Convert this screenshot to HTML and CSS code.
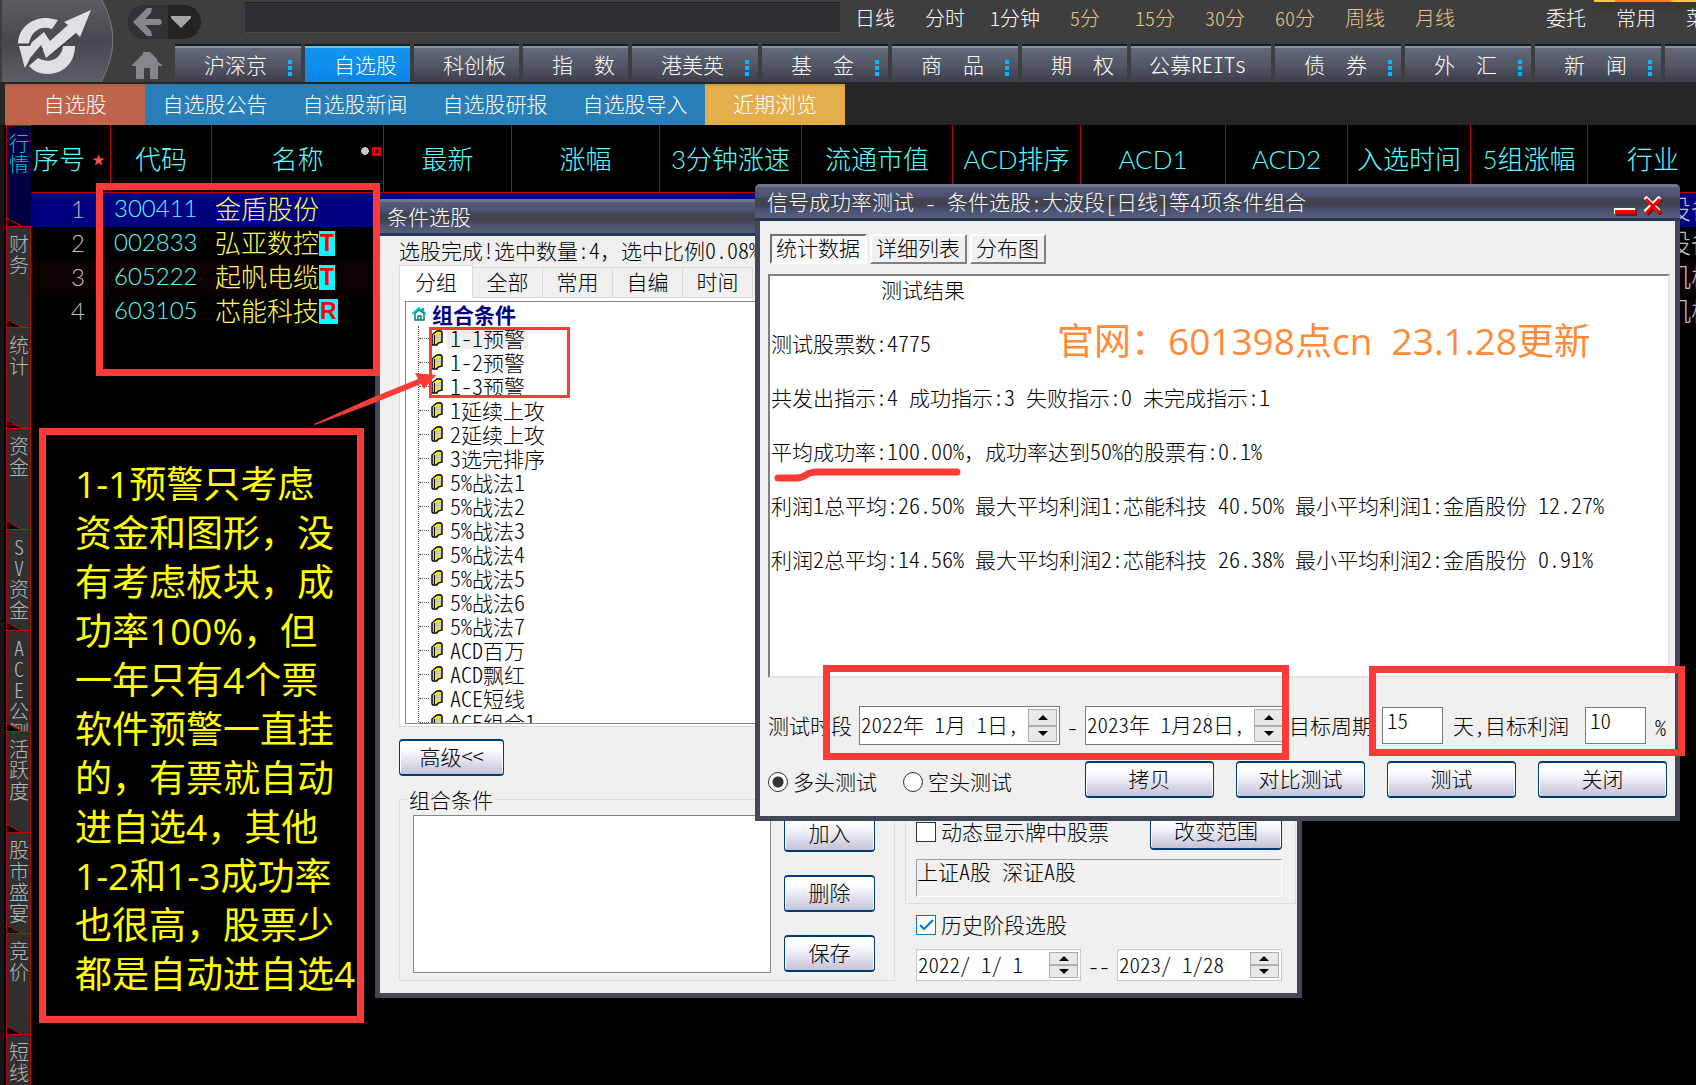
FILE: index.html
```html
<!DOCTYPE html>
<html lang="zh-CN">
<head>
<meta charset="utf-8">
<title>自选股</title>
<link rel="stylesheet" href="styles.css">
</head>
<body>
<svg width="0" height="0" class="defs" aria-hidden="true">
  <symbol id="leaf" viewBox="0 0 12 16">
    <path d="M1 5 L6 1 H10 L11 2 V12 L7 13 L6 15 H2 L1 14 Z" fill="#c8c8c0" stroke="#000" stroke-width="1.4"/>
    <path d="M2 5 L6 2 H10 L7 5 Z" fill="#ffff00"/>
    <path d="M3.500 5 V14" stroke="#000"/>
    <path d="M5.500 9 V13 M8.500 7 V12" stroke="#ffee00" stroke-width="1.600"/>
  </symbol>
</svg>
<div class="app">
  <header class="top">
    <button class="logo" aria-label="主菜单">
      <svg viewBox="0 0 117 83" width="117" height="83">
        <defs><linearGradient id="lg" x1="0" y1="0" x2="0" y2="1"><stop offset="0" stop-color="#5a5d62"/><stop offset=".5" stop-color="#46494f"/><stop offset="1" stop-color="#5b5f66"/></linearGradient></defs>
        <path d="M2 0 H102 Q124 41 101 82 H2 Z" fill="url(#lg)"/>
        <path d="M102 0 Q124 41 101 82" fill="none" stroke="#787b82"/>
        <path d="M18 44 C18 28 32 17 48 18 L58 20 L52 29 C41 25 31 31 29 44 Z" fill="#dfe0e4"/>
        <path d="M32 42 L44 32 L50 41 L68 25 L64 22 L91 10 L80 37 L76 33 L46 58 L41 45 L30 58 L25 69 L19 46 H30 Z" fill="#dfe0e4"/>
        <path d="M29 66 L38 58 C50 65 62 58 63 46 H75 C75 64 62 74 47 74 Q36 74 29 66 Z" fill="#dfe0e4"/>
        <path d="M18 44 H30 M24 69 L43 48 M50 56 L76 34" stroke="#383b40" fill="none"/>
      </svg>
    </button>
    <div class="navcol">
      <div class="backpill">
        <button aria-label="返回"><svg width="30" height="32" viewBox="0 0 30 32"><path d="M0 16 L14 2 H19 L18 7 L12 13 H27 Q31 16 27 19 H12 L18 25 L19 30 H14 Z" fill="#85878c"/></svg></button>
        <button aria-label="历史"><svg width="20" height="12" viewBox="0 0 20 12"><path d="M0 0 H20 V2 L10 12 L0 2 Z" fill="#a5a5a5"/></svg></button>
      </div>
      <button class="home" aria-label="首页"><svg width="30" height="28" viewBox="0 0 30 28"><path d="M0 14 L11 3 V1 H18 L25 8 V10 L30 14 V15 H26 V28 H18 V17 H12 V28 H4 V15 H0 Z" fill="#85878c"/></svg></button>
    </div>
    <div class="topmain">
      <div class="toprow">
        <input class="search" type="text" aria-label="搜索">
        <nav class="periods">
          <a href="#">日线</a><a href="#">分时</a><a href="#"><span>1</span>分钟</a><a href="#" class="tan"><span>5</span>分</a><a href="#" class="tan"><span>15</span>分</a><a href="#" class="tan"><span>30</span>分</a><a href="#" class="tan"><span>60</span>分</a><a href="#" class="tan">周线</a><a href="#" class="tan">月线</a>
        </nav>
        <nav class="periods extra"><a href="#">委托</a><a href="#">常用</a><a href="#">菜单</a></nav>
      </div>
      <nav class="markets">
        <a href="#" class="more">沪深京</a><a href="#" class="on">自选股</a><a href="#">科创板</a><a href="#">指　数</a><a href="#" class="more">港美英</a><a href="#" class="more">基　金</a><a href="#" class="more">商　品</a><a href="#">期　权</a><a href="#" class="reit">公募<span>REITs</span></a><a href="#" class="more">债　券</a><a href="#" class="more">外　汇</a><a href="#" class="more">新　闻</a><a href="#" class="more"></a>
      </nav>
    </div>
    <div class="banner"></div>
  </header>
  <nav class="subtabs">
    <a href="#" class="red">自选股</a><a href="#">自选股公告</a><a href="#">自选股新闻</a><a href="#">自选股研报</a><a href="#">自选股导入</a><a href="#" class="gold">近期浏览</a>
  </nav>
  <main class="main">
    <nav class="side">
      <a href="#" class="on">行<br>情</a><a href="#">财<br>务</a><a href="#">统<br>计</a><a href="#">资<br>金</a><a href="#"><span>S</span><br><span>V</span><br>资<br>金</a><a href="#"><span>A</span><br><span>C</span><br><span>E</span><br>公<br>测</a><a href="#">活<br>跃<br>度</a><a href="#">股<br>市<br>盛<br>宴</a><a href="#">竞<br>价</a><a href="#">短<br>线</a>
    </nav>
    <table class="quotes">
      <colgroup><col class="w80"><col class="w101"><col class="w172"><col class="w128"><col class="w148"><col class="w142"><col class="w151"><col class="w128"><col class="w145"><col class="w122"><col class="w123"><col class="w117"><col class="w130"></colgroup>
      <thead><tr>
        <th class="first">序号<i class="star">★</i></th><th>代码</th><th>名称<i class="marks"></i></th><th>最新</th><th>涨幅</th><th>3分钟涨速</th><th>流通市值</th><th>ACD排序</th><th>ACD1</th><th>ACD2</th><th>入选时间</th><th>5组涨幅</th><th>行业</th>
      </tr></thead>
      <tbody>
        <tr class="sel"><td>1</td><td>300411</td><td>金盾股份</td><td colspan="9"></td><td>专用设备</td></tr>
        <tr><td>2</td><td>002833</td><td>弘亚数控<b>T</b></td><td colspan="9"></td><td>专用设备</td></tr>
        <tr class="alt"><td>3</td><td>605222</td><td>起帆电缆<b>T</b></td><td colspan="9"></td><td>电力机械</td></tr>
        <tr><td>4</td><td>603105</td><td>芯能科技<b>R</b></td><td colspan="9"></td><td>电力机械</td></tr>
      </tbody>
    </table>
  </main>

  <section class="win picker" aria-label="条件选股">
    <h2 class="title">条件选股</h2>
    <div class="pbody">
      <p class="status">选股完成<span>!</span>选中数量<span>:4</span>，选中比例<span>0.08%</span></p>
      <div class="tabs"><button class="on">分组</button><button>全部</button><button>常用</button><button>自编</button><button>时间</button></div>
      <div class="page">
        <div class="tree">
          <div class="root"><svg width="14" height="14" viewBox="0 0 14 14"><path d="M0 7 L7 1 L14 7" fill="none" stroke="#00d8e0" stroke-width="2"/><path d="M3 6.500 V13 H12 V6.500 L7 3 Z" fill="#fff" stroke="#008080" stroke-width="1.500"/><path d="M6 13 V9 H9 V13 M11 1 V4" stroke="#008080" fill="none" stroke-width="1.500"/></svg>组合条件</div>
          <ul>
            <li class="cur"><svg><use href="#leaf"/></svg><em><span>1-1</span>预警</em></li>
            <li><svg><use href="#leaf"/></svg><em><span>1-2</span>预警</em></li>
            <li><svg><use href="#leaf"/></svg><em><span>1-3</span>预警</em></li>
            <li><svg><use href="#leaf"/></svg><em><span>1</span>延续上攻</em></li>
            <li><svg><use href="#leaf"/></svg><em><span>2</span>延续上攻</em></li>
            <li><svg><use href="#leaf"/></svg><em><span>3</span>选完排序</em></li>
            <li><svg><use href="#leaf"/></svg><em><span>5%</span>战法<span>1</span></em></li>
            <li><svg><use href="#leaf"/></svg><em><span>5%</span>战法<span>2</span></em></li>
            <li><svg><use href="#leaf"/></svg><em><span>5%</span>战法<span>3</span></em></li>
            <li><svg><use href="#leaf"/></svg><em><span>5%</span>战法<span>4</span></em></li>
            <li><svg><use href="#leaf"/></svg><em><span>5%</span>战法<span>5</span></em></li>
            <li><svg><use href="#leaf"/></svg><em><span>5%</span>战法<span>6</span></em></li>
            <li><svg><use href="#leaf"/></svg><em><span>5%</span>战法<span>7</span></em></li>
            <li><svg><use href="#leaf"/></svg><em><span>ACD</span>百万</em></li>
            <li><svg><use href="#leaf"/></svg><em><span>ACD</span>飘红</em></li>
            <li><svg><use href="#leaf"/></svg><em><span>ACE</span>短线</em></li>
            <li><svg><use href="#leaf"/></svg><em><span>ACE</span>组合<span>1</span></em></li>
          </ul>
        </div>
      </div>
      <button class="btn adv">高级<span>&lt;&lt;</span></button>
      <div class="lower">
        <fieldset class="combo">
          <legend>组合条件</legend>
          <div class="list"></div>
          <div class="acts"><button class="btn">加入</button><button class="btn">删除</button><button class="btn">保存</button></div>
        </fieldset>
        <div class="scope">
          <div class="range">
            <div class="between"><label class="chk"><input type="checkbox">动态显示牌中股票</label><button class="btn">改变范围</button></div>
            <div class="markets-in">上证<span>A</span>股<span> </span>深证<span>A</span>股</div>
          </div>
          <label class="chk hist"><input type="checkbox" checked>历史阶段选股</label>
          <div class="dates">
            <div class="date"><input type="text" value="2022/ 1/ 1" aria-label="开始日期"><div class="spin"><button aria-label="增加"></button><button aria-label="减少"></button></div></div>
            <span>--</span>
            <div class="date"><input type="text" value="2023/ 1/28" aria-label="结束日期"><div class="spin"><button aria-label="增加"></button><button aria-label="减少"></button></div></div>
          </div>
        </div>
      </div>
    </div>
  </section>

  <section class="win tester" aria-label="信号成功率测试">
    <h2 class="title">信号成功率测试<span> - </span>条件选股<span>:</span>大波段<span>[</span>日线<span>]</span>等<span>4</span>项条件组合
      <span class="ctl">
        <button aria-label="最小化"><svg width="23" height="8" viewBox="0 0 23 8"><path d="M1 1 H22 V6 H1 Z" fill="#f00"/><path d="M0 6 V1 H21" stroke="#fff" stroke-width="2" fill="none"/><path d="M2 7 H22 V2" stroke="#800000" stroke-width="1.500" fill="none"/></svg></button>
        <button aria-label="关闭窗口"><svg width="20" height="20" viewBox="0 0 20 20"><path d="M4 4 L18 18 M18 4 L4 18" stroke="#800000" stroke-width="4"/><path d="M2 1 L16 15 M17 1 L2 16" stroke="#fff" stroke-width="4"/><path d="M3 3 L17 17 M17 3 L3 17" stroke="#f00" stroke-width="3"/></svg></button>
      </span>
    </h2>
    <div class="tbody">
      <div class="modes"><button class="on">统计数据</button><button>详细列表</button><button>分布图</button></div>
      <div class="report">
        <p class="head">测试结果</p>
        <p>测试股票数<span>:4775</span></p>
        <p>共发出指示<span>:4 </span>成功指示<span>:3 </span>失败指示<span>:0 </span>未完成指示<span>:1</span></p>
        <p>平均成功率<span>:100.00%</span>，成功率达到<span>50%</span>的股票有<span>:0.1%</span></p>
        <p>利润<span>1</span>总平均<span>:26.50% </span>最大平均利润<span>1:</span>芯能科技<span> 40.50% </span>最小平均利润<span>1:</span>金盾股份<span> 12.27%</span></p>
        <p>利润<span>2</span>总平均<span>:14.56% </span>最大平均利润<span>2:</span>芯能科技<span> 26.38% </span>最小平均利润<span>2:</span>金盾股份<span> 0.91%</span></p>
      </div>
      <div class="params">
        <label for="from">测试时段</label>
        <div class="date tall"><input id="from" type="text" value="2022年 1月 1日,"><div class="spin"><button aria-label="增加"></button><button aria-label="减少"></button></div></div>
        <span>-</span>
        <div class="date tall"><input type="text" value="2023年 1月28日," aria-label="结束日期"><div class="spin"><button aria-label="增加"></button><button aria-label="减少"></button></div></div>
        <label for="days">目标周期</label>
        <input id="days" class="num" type="text" value="15">
        <label for="gain">天<span>,</span>目标利润</label>
        <input id="gain" class="num" type="text" value="10">
        <span>%</span>
      </div>
      <div class="bottom">
        <label class="chk"><input type="radio" name="side" checked>多头测试</label>
        <label class="chk"><input type="radio" name="side">空头测试</label>
        <div class="btns"><button class="btn">拷贝</button><button class="btn">对比测试</button><button class="btn">测试</button><button class="btn">关闭</button></div>
      </div>
    </div>
  </section>

  <div class="mark m-stocks"></div>
  <div class="mark m-note">
    <p>1-1预警只考虑<br>资金和图形，没<br>有考虑板块，成<br>功率100%，但<br>一年只有4个票<br>软件预警一直挂<br>的，有票就自动<br>进自选4，其他<br>1-2和1-3成功率<br>也很高，股票少<br>都是自动进自选4</p>
  </div>
  <div class="mark thin m-alerts"></div>
  <div class="mark m-period"></div>
  <div class="mark m-goal"></div>
  <p class="site">官网：601398点cn  23.1.28更新</p>
  <svg class="arrow" width="124" height="56" viewBox="0 0 124 56"><path d="M0 54 L55 29 L104 9 L101 3 L122 5 L110 19 L107 14 L55 35 L1 55 Z" fill="#fc3a38"/></svg>
  <svg class="stroke" width="190" height="16" viewBox="0 0 190 16"><path d="M6 11 H24 Q30 11 34 8 Q38 5 46 5 H185" fill="none" stroke="#fc3a38" stroke-width="7" stroke-linecap="round"/></svg>
</div>
</body>
</html>
```
FILE: styles.css
```css
* { box-sizing: border-box; }
body {
  margin: 0;
  background: #000;
  font: 300 21px/27px "Noto Sans CJK SC", sans-serif;
  color: #000;
}
p, h2, ul, fieldset { margin: 0; padding: 0; }
ul { list-style: none; }
a { color: inherit; text-decoration: none; }
em, i { font-style: normal; }
button, input { font: inherit; color: inherit; margin: 0; padding: 0; border: 0; background: none; }
.defs { position: absolute; }

.app { position: relative; height: 100vh; overflow: hidden; }

/* Half-width Latin runs inside the interface text */
.top span, .side span, .win span { font-size: 22px; line-height: 20px; font-feature-settings: "hwid"; white-space: pre; }
.top .periods span, .side span { font-size: 20px; }

/* ---- top bar ---- */
.top { position: relative; display: flex; height: 82px; background: #3e3e3e; color: #fff; }
.logo { width: 117px; height: 82px; }
.logo svg { display: block; }
.navcol { display: flex; flex-direction: column; gap: 12px; width: 58px; padding: 5px 0 0 11px; }
.backpill { display: flex; width: 73px; height: 34px; border-radius: 17px; overflow: hidden; background: #232323; flex: none; position: relative; z-index: 1; }
.backpill button { display: grid; place-items: center; width: 40px; background: #303236; }
.backpill button + button { width: 26px; background: none; }
.home { width: 30px; height: 28px; margin-left: 4px; }
.home svg { display: block; }
.topmain { flex: 1; min-width: 0; }
.toprow { display: flex; height: 44px; padding-left: 70px; }
.search { width: 595px; height: 31px; margin-top: 2px; background: #2d3134; border-top: 1px solid #222; border-bottom: 1px solid #4a4a4a; flex: none; }
.periods { display: flex; font-size: 20px; line-height: 35px; }
.periods a { width: 70px; text-align: center; flex: none; }
.periods.extra { margin-left: 61px; }
.periods .tan { color: #e6c68d; }
.markets { display: flex; gap: 4px; height: 38px; }
.markets a {
  position: relative; flex: none; width: 105px; padding-left: 29px; line-height: 36px;
  border-top: 2px solid #1a1b1d; white-space: nowrap;
  background: linear-gradient(#8794a0 0 2px, #646a7b 2px, #535866 50%, #3b3f49);
}
.markets .more { width: 126px; }
.markets .reit { width: 140px; padding-left: 18px; }
.markets .on { background: linear-gradient(#58c8f4 0 2px, #1496f0 2px, #0a84e8); }
.markets .more::after {
  content: ""; position: absolute; right: 9px; top: 14px; width: 4px; height: 16px;
  background: repeating-linear-gradient(#00b8ff 0 4px, transparent 4px 6px);
}
.banner { position: absolute; right: 0; top: 0; width: 102px; height: 2px; background: linear-gradient(90deg, #ffc83c 20px, #f47a2a 22px 75px, #ffc83c 80px); box-shadow: 0 3px 8px #222; }

.subtabs { display: flex; height: 43px; padding: 2px 0 0 5px; background: #262626; color: #fff; }
.subtabs a { width: 140px; text-align: center; line-height: 35px; background: #2980b9; border-top: 2px solid #2a79ab; }
.subtabs .red { background: #bf644b; border-color: #b35c43; }
.subtabs .gold { background: #e3ae4b; border-color: #cf9c3c; }

/* ---- quotes ---- */
.main { display: flex; align-items: flex-start; }
.side { width: 31px; flex: none; padding-left: 2px; border-left: 4px solid #171717; font-size: 20px; line-height: 21px; }
.side a {
  position: relative; display: block; height: 101px; padding: 6px 0 0 1px; overflow: hidden;
  border: 1px solid #c00000; border-bottom: 0; background: #303030; color: #b8b8b8; text-align: center;
}
.side a::after {
  content: ""; position: absolute; left: -1px; bottom: 0; width: 15px; height: 8px;
  background: linear-gradient(to top right, #000 46%, #c00000 47% 54%, transparent 55%);
}
.side .on { background: #000040; color: #00c8c8; border-right-color: #000040; }
.quotes { table-layout: fixed; width: 1687px; flex: none; border-collapse: separate; border-spacing: 0; font-family: Lato, "Noto Sans CJK SC", sans-serif; line-height: 30px; }
.w80 { width: 80px; } .w101 { width: 101px; } .w172 { width: 172px; } .w128 { width: 128px; }
.w148 { width: 148px; } .w142 { width: 142px; } .w151 { width: 151px; } .w145 { width: 145px; }
.w122 { width: 122px; } .w123 { width: 123px; } .w117 { width: 117px; } .w130 { width: 130px; }
.quotes th { position: relative; height: 68px; padding: 0; font-weight: 300; font-size: 26px; color: #55ffff; border-right: 1px solid #c00000; border-bottom: 1px solid #c00000; white-space: nowrap; }
.quotes th:last-child { border-right: 0; }
.quotes .first { text-align: left; padding-left: 2px; }
.star { position: absolute; right: 5px; top: 19px; font-size: 13px; color: #ff5050; }
.marks { position: absolute; right: 2px; top: 22px; width: 20px; height: 9px; background: radial-gradient(circle 4px at 4px 4px, #c8c8c8 90%, transparent), linear-gradient(#000, #000) 14px 3px / 3px 3px no-repeat, linear-gradient(#e00000, #e00000) 11px 0 / 9px 9px no-repeat; }
.quotes td { height: 34px; padding: 0 0 2px 3px; white-space: nowrap; font-size: 26px; color: #ffff55; }
.quotes td:first-child { text-align: right; padding-right: 26px; font-size: 24px; color: #c0c0c0; }
.quotes td:nth-child(2) { font-size: 24px; color: #55ffff; padding-bottom: 4px; }
.quotes td:last-child { padding-left: 25px; color: #c0c0c0; }
.quotes .sel td { background: #000080; }
.quotes .alt td { background: #0c0000; }
.quotes b { display: inline-block; padding: 0 1px; background: #0ff; color: #f00; font: bold 23px/25px "Liberation Sans", sans-serif; vertical-align: 2px; }

/* ---- dialogs ---- */
.win { position: absolute; background: #f0f0f0; border: 5px solid #434856; border-top: 0; border-radius: 5px 5px 0 0; }
.title {
  display: flex; align-items: center; height: 37px; margin: 0 -5px; padding: 0 12px 2px; border-radius: 5px 5px 0 0;
  font-size: 21px; font-weight: 300; line-height: 35px; color: #fff; white-space: nowrap;
  background: linear-gradient(#70778a 0 3px, #575c7c 3px, #4d5272 12px, #3f444f 15px 22px, #4c5174 26px, #595e78 34px, #26385a 34px);
}
.win .btn {
  height: 37px; padding-bottom: 2px; border: 2px solid #003c74; border-left-width: 1px; border-right-width: 1px; border-radius: 4px; line-height: 29px;
  background: linear-gradient(#fff 20%, #f0f0fa 45%, #dadae8 70%, #c4c3d6); box-shadow: inset 1px 0 #fff, inset -1px 0 #fff;
}
.chk { display: flex; align-items: center; gap: 5px; white-space: nowrap; }
.chk input { appearance: none; width: 20px; height: 20px; border: 1px solid #333; background: #fff; flex: none; }
.chk [type=radio] { border-radius: 50%; }
.chk [type=radio]:checked { background: radial-gradient(circle, #333 5px, #fff 6px); }
.chk [type=checkbox]:checked { border-color: #0078d7; background: #fff url("data:image/svg+xml,%3Csvg xmlns='http://www.w3.org/2000/svg' viewBox='0 0 18 18'%3E%3Cpath d='M3 9l4 4 9-9' fill='none' stroke='%230078d7' stroke-width='2'/%3E%3C/svg%3E"); }
.date { display: flex; width: 165px; height: 32px; padding: 2px 2px 2px 1px; background: #fff; border: 1px solid #c8c8c8; }
.date input { flex: 1; min-width: 0; padding-bottom: 2px; font-feature-settings: "hwid"; }
.spin { display: flex; flex-direction: column; width: 29px; }
.spin button { flex: 1; display: grid; place-items: center; border: 1px solid #adadad; background: #e9e9e9; }
.spin button::before { content: ""; border: 5px solid transparent; border-top: 0; border-bottom-color: #000; }
.spin button + button::before { border-top: 5px solid #000; border-bottom: 0; }
.date.tall { width: 201px; height: 39px; border-color: #7a7a7a; }

.picker { left: 375px; top: 199px; width: 927px; height: 799px; }
.pbody { padding: 1px 1px 0 19px; }
.status { height: 28px; }
.tabs { display: flex; align-items: flex-end; height: 33px; }
.tabs button { width: 70px; height: 31px; padding-bottom: 2px; border: 1px solid #d9d9d9; border-left: 0; }
.tabs .on { width: 74px; height: 33px; background: #fff; border-left: 1px solid #d9d9d9; border-bottom: 0; }
.page { height: 429px; padding: 3px 5px 2px; background: #fff; border: 1px solid #d9d9d9; border-top: 0; }
.tree { height: 423px; padding: 0 6px; overflow: hidden; border: 1px solid #82868f; line-height: 22px; }
.root { display: flex; align-items: center; gap: 6px; height: 24px; font-weight: 700; color: #000080; }
.tree ul { margin-left: 6px; border-left: 1px dotted #555; }
.tree li { display: flex; align-items: center; height: 24px; }
.tree li::before { content: ""; width: 10px; border-top: 1px dotted #555; }
.tree li svg { width: 12px; height: 16px; margin: 0 4px 0 2px; }
.tree em { padding: 0 3px; }
.cur em { background: #efefef; }
.adv { display: block; width: 105px; margin-top: 12px; }
.lower { display: flex; gap: 10px; margin-top: 10px; }
.combo { display: flex; flex: none; gap: 13px; width: 496px; height: 195px; padding: 0 19px 6px 13px; border: 1px solid #dcdcdc; }
.combo legend { margin-left: -6px; padding: 0 2px; }
.combo .list { flex: 1; height: 158px; margin-top: 2px; background: #fff; border: 1px solid #82868f; }
.acts { display: flex; flex-direction: column; gap: 23px; margin-top: 2px; width: 91px; }
.scope { flex: 1; }
.range { height: 118px; padding: 27px 13px 5px 10px; border: 1px solid #dcdcdc; border-top: 0; }
.between { display: flex; justify-content: space-between; align-items: center; }
.range .btn { width: 132px; }
.markets-in { height: 38px; margin-top: 9px; line-height: 20px; border: 1px solid #fff; border-top-color: #a0a0a0; border-left-color: #a0a0a0; }
.hist { margin: 7px 0 0 11px; }
.dates { display: flex; justify-content: space-between; align-items: center; margin: 11px 14px 0 11px; }

.tester { left: 755px; top: 184px; width: 925px; height: 637px; }
.title .ctl { display: flex; align-items: flex-end; gap: 6px; margin-left: auto; padding: 8px 5px 0 0; }
.ctl svg { display: block; }
.tbody { padding: 13px 5px 0 8px; }
.modes { display: flex; gap: 3px; padding-left: 2px; }
.modes button { height: 30px; padding: 0 5px 4px 4px; border: 2px solid; border-color: #fff #808080 #808080 #fff; line-height: 22px; }
.modes .on { background: #f8f8f8; border-color: #707070 #fff #fff #707070; }
.report { display: flex; flex-direction: column; gap: 27px; height: 404px; margin-top: 10px; padding-left: 1px; background: #fff; border: 2px solid #e3e3e3; border-top-color: #808080; border-left-color: #808080; white-space: nowrap; }
.head { padding-left: 110px; }
.params { display: grid; grid-template-columns: 91px 201px 25px 201px 96px 61px 142px 61px 20px; align-items: center; height: 39px; margin-top: 28px; white-space: nowrap; }
.params > span { text-align: right; }
.params > .date + .date, .params > span:nth-child(3) { text-align: center; }
.params label:not(:first-child) { padding-left: 3px; }
.params label[for=gain] { padding-left: 10px; }
.num { width: 61px; height: 37px; padding: 0 4px 12px; background: #fff; border: 1px solid #7a7a7a; font-feature-settings: "hwid"; }
.bottom { display: flex; align-items: center; gap: 26px; margin-top: 16px; }
.bottom .chk { padding-top: 4px; }
.btns { display: flex; gap: 22px; margin-left: auto; padding-right: 3px; }
.btns .btn { width: 129px; }

/* ---- annotations over the desktop ---- */
.mark { position: absolute; border: 7px solid #fc3a38; }
.mark.thin { border-width: 3px; }
.m-stocks { left: 96px; top: 183px; width: 284px; height: 193px; }
.m-note { left: 39px; top: 428px; width: 325px; height: 595px; padding: 24px 0 0 29px; background: #000; }
.m-note p { font: 400 37px/49px "Open Sans", "Noto Sans CJK SC", sans-serif; color: #ff0; white-space: nowrap; }
.m-alerts { left: 429px; top: 327px; width: 141px; height: 71px; }
.m-period { left: 823px; top: 665px; width: 466px; height: 95px; }
.m-goal { left: 1369px; top: 666px; width: 316px; height: 90px; }
.site { position: absolute; left: 1057px; top: 314px; font: 400 37px/54px "Open Sans", "Noto Sans CJK SC", sans-serif; color: #ff8a38; white-space: pre; }
.arrow { position: absolute; left: 314px; top: 370px; }
.stroke { position: absolute; left: 772px; top: 467px; }
```
